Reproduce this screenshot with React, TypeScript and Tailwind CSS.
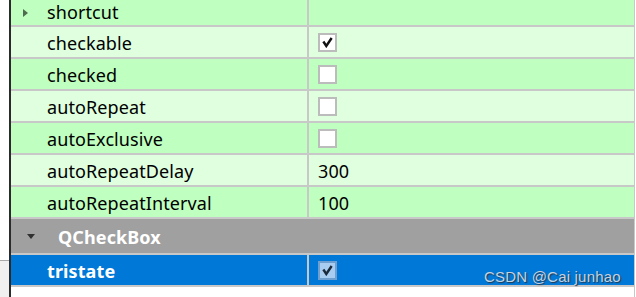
import React from 'react';

interface Prop {
  name: string;
  value?: string;
  check?: 'on' | 'off';
}

const props: Prop[] = [
  { name: 'checkable', check: 'on' },
  { name: 'checked', check: 'off' },
  { name: 'autoRepeat', check: 'off' },
  { name: 'autoExclusive', check: 'off' },
  { name: 'autoRepeatDelay', value: '300' },
  { name: 'autoRepeatInterval', value: '100' },
];

const CheckMark = ({ color }: { color: string }) => (
  <svg width="11" height="11" viewBox="0 0 11 11" className="block">
    <path d="M2 5.5 L4.3 9 L9 2" fill="none" stroke={color} strokeWidth="2.4" strokeLinecap="square" />
  </svg>
);

const Box = ({ on, selected }: { on: boolean; selected?: boolean }) => (
  <div
    className={`w-[19px] h-[19px] border-2 flex items-center justify-center ${
      selected ? 'bg-[#a9cdf0] border-[#6f9fcf]' : 'bg-white border-[#bcbcbc]'
    }`}
  >
    {on && <CheckMark color={selected ? '#1a2a3a' : '#111111'} />}
  </div>
);

const Row = ({ p, odd }: { p: Prop; odd: boolean }) => (
  <div className={`flex h-[32px] border-b-2 border-[#c8c8c8] ${odd ? 'bg-[#bfffbf]' : 'bg-[#dfffdf]'}`}>
    <div className="w-[296px] pl-[36px] pt-[2px] flex items-center text-black">{p.name}</div>
    <div className="w-[2px] bg-[#c8c8c8]" />
    <div className="flex-1 pl-[9px] flex items-center text-black">
      {p.check ? <Box on={p.check === 'on'} /> : <span className="pt-[2px]">{p.value}</span>}
    </div>
  </div>
);

export default function App() {
  return (
    <div
      className="relative w-[636px] h-[297px] flex overflow-hidden bg-white text-[18px] tracking-[0.1px]"
      style={{ fontFamily: '"Noto Sans", "Open Sans", sans-serif' }}
    >
      <div className="w-[9px] flex flex-col">
        <div className="h-[260px] bg-white" />
        <div className="h-[1px] bg-[#a8a8a8]" />
        <div className="flex-1 bg-[#f0f0f0]" />
      </div>
      <div className="w-[2px] bg-[#2b2b2b]" />
      <div className="w-[623px] flex flex-col">
        <div className="flex h-[27px] border-b-2 border-[#c8c8c8] bg-[#bfffbf]">
          <div className="w-[296px] flex items-center">
            <div className="w-[12px]" />
            <svg width="5" height="8" viewBox="0 0 5 8" className="block">
              <path d="M0 0 L5 4 L0 8 Z" fill="#4d6b4d" />
            </svg>
            <span className="pl-[19px] text-black">shortcut</span>
          </div>
          <div className="w-[2px] bg-[#c8c8c8]" />
          <div className="flex-1" />
        </div>
        {props.map((p, i) => (
          <Row key={p.name} p={p} odd={i % 2 === 1} />
        ))}
        <div className="flex items-center h-[36px] border-b-2 border-[#c8c8c8] bg-[#a0a0a0]">
          <div className="w-[16px]" />
          <svg width="8" height="5" viewBox="0 0 8 5" className="block">
            <path d="M0 0 L8 0 L4 5 Z" fill="#303030" />
          </svg>
          <span className="pl-[23px] pt-[2px] font-bold text-white">QCheckBox</span>
        </div>
        <div className="flex h-[32px] border-b-2 border-[#c8c8c8] bg-[#0078d7]">
          <div className="w-[296px] pl-[36px] pt-[2px] flex items-center font-bold text-white">tristate</div>
          <div className="w-[2px] bg-[#c8c8c8]" />
          <div className="flex-1 pl-[9px] flex items-center">
            <Box on selected />
          </div>
        </div>
        <div className="flex-1 bg-white" />
      </div>
      <div className="w-[1px] bg-[#c8c8c8]" />
      <div className="flex-1 bg-white" />
      <div
        className="absolute left-[484px] top-[266px] text-[15px] text-[#c4d2e0] tracking-[0.2px]"
        style={{ fontFamily: '"Liberation Sans", Arial, sans-serif', textShadow: '1px 1px 1px #26384a' }}
      >
        CSDN @Cai junhao
      </div>
    </div>
  );
}
